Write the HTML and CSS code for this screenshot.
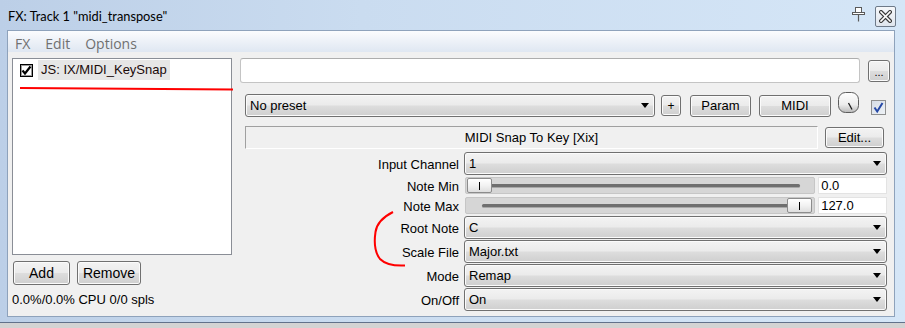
FILE: index.html
```html
<!DOCTYPE html>
<html>
<head>
<meta charset="utf-8">
<link rel="stylesheet" href="styles.css">
</head>
<body>
<div class="win">
  <div class="titlebar">
    <span class="title">FX: Track 1 "midi_transpose"</span>
    <svg class="pin" width="15" height="16" viewBox="0 0 15 16">
      <rect x="4.5" y="1.5" width="6" height="5" fill="#fff" stroke="#5a5a5a"/>
      <rect x="1.5" y="6.5" width="12" height="2" fill="#fff" stroke="#5a5a5a"/>
      <line x1="7.5" y1="9" x2="7.5" y2="15.5" stroke="#5a5a5a" stroke-width="1.2"/>
    </svg>
    <div class="closebtn">
      <svg width="13" height="13" viewBox="0 0 13 13">
        <path d="M2 2 L11 11 M11 2 L2 11" stroke="#3b3b3b" stroke-width="4" stroke-linecap="square"/>
        <path d="M2 2 L11 11 M11 2 L2 11" stroke="#fff" stroke-width="1.6" stroke-linecap="square"/>
      </svg>
    </div>
  </div>
  <div class="client">
    <div class="menubar">
      <span class="menu">FX</span>
      <span class="menu">Edit</span>
      <span class="menu">Options</span>
    </div>
    <div class="main">
      <div class="leftcol">
        <div class="fxlist">
          <div class="fxitem">
            <span class="cb">
              <svg width="11" height="11" viewBox="0 0 11 11"><path d="M1.5 5.5 L4 8.5 L9.5 1.5" fill="none" stroke="#000" stroke-width="2.2"/></svg>
            </span>
            <span class="fxname">JS: IX/MIDI_KeySnap</span>
          </div>
        </div>
        <div class="btnrow">
          <button class="btn b-add">Add</button>
          <button class="btn b-remove">Remove</button>
        </div>
        <div class="cpu">0.0%/0.0% CPU 0/0 spls</div>
      </div>
      <div class="rightcol">
        <div class="row1">
          <div class="textfield"></div>
          <button class="btn b-dots">...</button>
        </div>
        <div class="row2">
          <div class="combo c-preset"><span class="cval">No preset</span><span class="arrow"></span></div>
          <button class="btn b-plus">+</button>
          <button class="btn b-param">Param</button>
          <button class="btn b-midi">MIDI</button>
          <svg class="knob" width="21" height="22" viewBox="0 0 21 22">
            <defs>
              <linearGradient id="kg" x1="0" y1="0" x2="0" y2="1">
                <stop offset="0" stop-color="#ffffff"/>
                <stop offset="0.6" stop-color="#ececec"/>
                <stop offset="1" stop-color="#b9b9b9"/>
              </linearGradient>
            </defs>
            <rect x="0.5" y="0.5" width="20" height="20" rx="7" fill="url(#kg)" stroke="#5c5c5c"/>
            <line x1="10.5" y1="11" x2="14" y2="17.5" stroke="#1a1a1a" stroke-width="1.3"/>
          </svg>
          <span class="chk">
            <svg width="13" height="13" viewBox="0 0 13 13"><path d="M2.5 6.5 L5.2 10.5 L10.5 2" fill="none" stroke="#2548a6" stroke-width="2"/></svg>
          </span>
        </div>
        <div class="row3">
          <div class="descpanel">MIDI Snap To Key [Xix]</div>
          <button class="btn b-edit">Edit...</button>
        </div>
        <div class="params">
          <div class="plabel r24">Input Channel</div>
          <div class="pctl r24"><div class="combo"><span class="cval">1</span><span class="arrow"></span></div></div>

          <div class="plabel r20">Note Min</div>
          <div class="pctl r20 srow">
            <div class="slider"><div class="groove"></div><div class="thumb" style="left:1px"><i></i></div></div>
            <div class="valbox">0.0</div>
          </div>

          <div class="plabel r20">Note Max</div>
          <div class="pctl r20 srow">
            <div class="slider"><div class="groove"></div><div class="thumb" style="left:321px"><i></i></div></div>
            <div class="valbox">127.0</div>
          </div>

          <div class="plabel r24">Root Note</div>
          <div class="pctl r24"><div class="combo"><span class="cval">C</span><span class="arrow"></span></div></div>

          <div class="plabel r24">Scale File</div>
          <div class="pctl r24"><div class="combo"><span class="cval">Major.txt</span><span class="arrow"></span></div></div>

          <div class="plabel r24">Mode</div>
          <div class="pctl r24"><div class="combo"><span class="cval">Remap</span><span class="arrow"></span></div></div>

          <div class="plabel r24">On/Off</div>
          <div class="pctl r24"><div class="combo"><span class="cval">On</span><span class="arrow"></span></div></div>
        </div>
      </div>
    </div>
  </div>
</div>
<svg class="annot" width="905" height="328" viewBox="0 0 905 328">
  <path d="M20 88 L233 89.5" fill="none" stroke="#f00" stroke-width="2"/>
  <path d="M393 212 C 385 216, 377 222, 375.5 232 C 374 242, 374.5 252, 380 259 C 386 265, 395 266, 405 265.5" fill="none" stroke="#f00" stroke-width="2"/>
</svg>
</body>
</html>
```
FILE: styles.css
```css
* { box-sizing: border-box; }
html, body { margin: 0; padding: 0; }
body {
  width: 905px;
  height: 328px;
  overflow: hidden;
  position: relative;
  background: #d3d3d3;
  font-family: "Liberation Sans", Arial, sans-serif;
  font-size: 13px;
  color: #000;
}
.win {
  width: 905px;
  height: 323px;
  background: linear-gradient(to right, #bccfe7 0%, #cadcf0 40%, #d5e6f7 100%);
  border-bottom: 1px solid #62718a;
  display: flex;
  flex-direction: column;
}
.titlebar {
  height: 30px;
  flex: none;
  display: flex;
  align-items: center;
  padding: 0 9px 0 8px;
}
.title {
  flex: 1;
  font-family: Lato, "Open Sans", sans-serif;
  font-size: 12.8px;
  color: #000;
  margin-top: 1px;
}
.pin { margin-right: 9px; margin-top: -2px; }
.closebtn {
  width: 21px;
  height: 21px;
  margin-top: 2px;
  border: 1px solid #6e7a89;
  border-radius: 2px;
  background: linear-gradient(#f6f8fb, #dfe5ed);
  display: flex;
  align-items: center;
  justify-content: center;
}
.client {
  margin: 0 10px 0 7px;
  height: 287px;
  flex: none;
  border: 1px solid #8ea2bb;
  background: #f0f0f0;
  display: flex;
  flex-direction: column;
}
.menubar {
  height: 21px;
  flex: none;
  display: flex;
  align-items: center;
  padding-left: 7px;
  gap: 15px;
  background: linear-gradient(#fbfcfe 0%, #eef2f8 45%, #dfe7f2 100%);
  font-family: "Open Sans", sans-serif;
  font-size: 14px;
  color: #707070;
}
.menu { margin-top: 3px; }
.main {
  flex: 1;
  display: flex;
  padding: 6px 0 0 4px;
  gap: 8px;
}
.leftcol {
  width: 220px;
  display: flex;
  flex-direction: column;
}
.fxlist {
  height: 197px;
  background: #fff;
  border: 1px solid #8a8e96;
  padding: 1px 0 0 7px;
}
.fxitem {
  height: 20px;
  display: flex;
  align-items: center;
}
.cb {
  width: 13px;
  height: 13px;
  border: 1px solid #000;
  box-shadow: inset 0 0 0 1px #9a9a9a;
  background: #fff;
  display: flex;
  align-items: center;
  justify-content: center;
}
.fxname {
  margin-left: 5px;
  padding: 0 3px;
  height: 20px;
  line-height: 20px;
  background: #e6e6e6;
  color: #1a0a0a;
}
.btnrow {
  margin-top: 6px;
  display: flex;
}
.btn {
  font-family: "Liberation Sans", Arial, sans-serif;
  font-size: 13px;
  color: #000;
  padding: 0;
  border: 1px solid #707070;
  border-radius: 3px;
  background: linear-gradient(#f3f3f3 0%, #ebebeb 48%, #dddddd 52%, #cfcfcf 100%);
  box-shadow: inset 0 0 0 1px #fbfbfb;
  display: flex;
  align-items: center;
  justify-content: center;
}
.b-add { width: 57px; height: 24px; margin-left: 1px; font-size: 14px; }
.b-remove { width: 64px; height: 24px; margin-left: 7px; font-size: 14px; }
.cpu {
  margin-top: 6px;
  line-height: 18px;
  font-size: 13px;
}
.rightcol {
  width: 650px;
  display: flex;
  flex-direction: column;
}
.row1 { display: flex; height: 25px; }
.textfield {
  width: 620px;
  height: 25px;
  background: #fff;
  border: 1px solid #c4c4c4;
  border-top-color: #adadad;
  border-radius: 3px;
}
.b-dots { width: 22px; height: 22px; margin: 2px 0 0 8px; font-size: 11px; padding-top: 2px; }
.row2 {
  display: flex;
  align-items: center;
  height: 23px;
  margin-top: 11px;
  padding-left: 5px;
}
.combo {
  height: 23px;
  border: 1px solid #707070;
  border-radius: 3px;
  background: linear-gradient(#f3f3f3 0%, #ebebeb 48%, #dddddd 52%, #cfcfcf 100%);
  box-shadow: inset 0 0 0 1px #fbfbfb;
  display: flex;
  align-items: center;
  padding: 0 5px 0 4px;
}
.cval { flex: 1; white-space: nowrap; }
.arrow {
  width: 0;
  height: 0;
  border-left: 4.5px solid transparent;
  border-right: 4.5px solid transparent;
  border-top: 5px solid #000;
}
.c-preset { width: 410px; }
.b-plus { width: 20px; height: 21px; margin-left: 6px; font-size: 12px; }
.b-param { width: 61px; height: 22px; margin-left: 9px; }
.b-midi { width: 72px; height: 22px; margin-left: 8px; }
.knob { margin-left: 7px; align-self: flex-start; margin-top: -2px; }
.chk {
  width: 15px;
  height: 15px;
  margin-left: 12px;
  margin-top: 3px;
  border: 1px solid #8e8f8f;
  background: linear-gradient(135deg, #d5dce6, #eef2f6);
  display: flex;
  align-items: center;
  justify-content: center;
}
.row3 {
  display: flex;
  margin-top: 9px;
  padding-left: 5px;
  height: 23px;
}
.descpanel {
  width: 573px;
  height: 23px;
  border: 1px solid #a0a0a0;
  border-right-color: #ffffff;
  border-bottom-color: #ffffff;
  background: #f0f0f0;
  display: flex;
  align-items: center;
  justify-content: center;
}
.b-edit { width: 59px; height: 21px; margin: 1px 0 0 7px; }
.params {
  margin-top: 3px;
  display: grid;
  grid-template-columns: 219px 423px;
  column-gap: 5px;
}
.plabel {
  text-align: right;
  display: flex;
  align-items: center;
  justify-content: flex-end;
}
.r24 { height: 24px; }
.r20 { height: 20px; }
.pctl { display: flex; flex-direction: column; }
.pctl .combo { height: 23px; }
.srow { flex-direction: row; padding-top: 1px; }
.slider {
  position: relative;
  width: 351px;
  height: 17px;
  margin-left: 1px;
  background: #d6d6d6;
  border: 1px solid #c6c6c6;
  border-radius: 2px;
}
.groove {
  position: absolute;
  left: 16px;
  right: 14px;
  top: 6px;
  height: 3px;
  border-radius: 2px;
  background: #6f6f6f;
  box-shadow: 0 1px 0 #a8a8a8;
}
.thumb {
  position: absolute;
  top: 0;
  width: 25px;
  height: 15px;
  border: 1px solid #8c8c8c;
  border-radius: 2px;
  background: linear-gradient(#ffffff 0%, #f2f2f2 50%, #dedede 100%);
}
.thumb i {
  position: absolute;
  left: 11px;
  top: 3px;
  width: 1px;
  height: 8px;
  background: #000;
}
.valbox {
  width: 69px;
  height: 17px;
  margin-left: 3px;
  background: #fff;
  border: 1px solid #e3e3e3;
  padding-left: 2px;
  line-height: 16px;
}
.annot {
  position: absolute;
  left: 0;
  top: 0;
  pointer-events: none;
}
```
